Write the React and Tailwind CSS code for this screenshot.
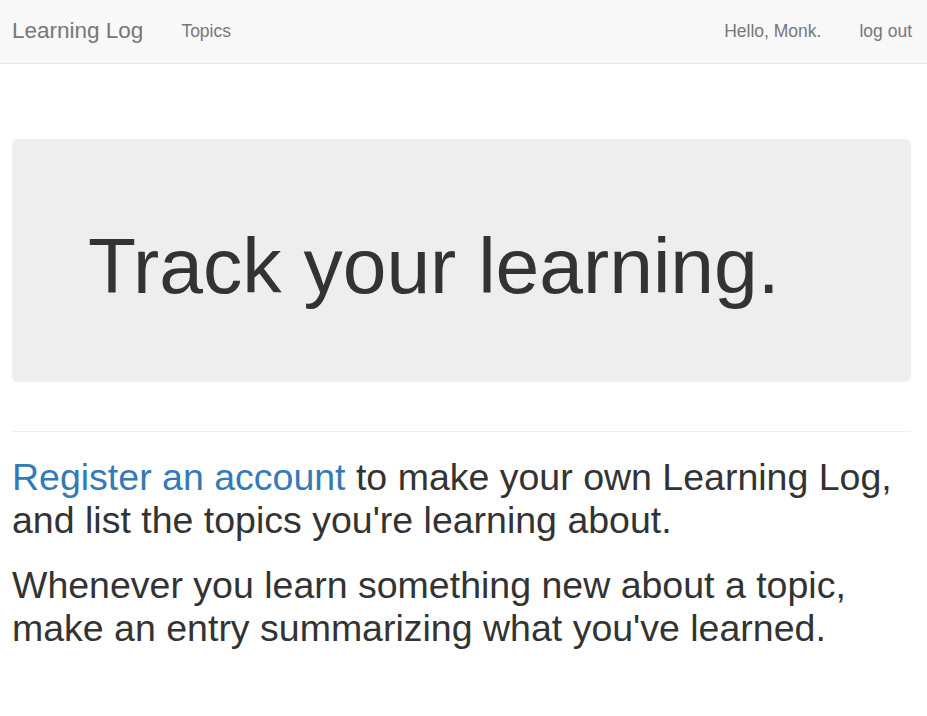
export default function App() {
  return (
    <div className="min-h-[716px] bg-white" style={{ fontFamily: '"Liberation Sans", Arial, sans-serif' }}>
      <nav className="h-[64px] bg-[#f8f8f8] border-b border-[#e7e7e7] flex items-center px-[12px] pr-[15px]">
        <a className="text-[22.5px] text-[#777] leading-none">Learning Log</a>
        <a className="ml-[38px] text-[17.5px] text-[#777] leading-none">Topics</a>
        <div className="ml-auto flex items-center gap-[38px]">
          <span className="text-[17.5px] text-[#777] leading-none">Hello, Monk.</span>
          <a className="text-[17.5px] text-[#777] leading-none">log out</a>
        </div>
      </nav>
      <div className="px-[12px] pr-[16px]">
        <div className="mt-[75px] h-[243px] rounded-[6px] bg-[#eee] pt-[84px] pl-[76px]">
          <h1 className="text-[78.6px] leading-[87px] text-[#333] whitespace-nowrap">Track your learning.</h1>
        </div>
        <div className="mt-[49px] h-px bg-[#eee]" />
        <p className="mt-[24px] text-[37.5px] leading-[43px] text-[#333]">
          <a className="text-[#337ab7]">Register an account</a> to make your own Learning Log, and list the topics you're learning about.
        </p>
        <p className="mt-[22px] text-[37.5px] leading-[43px] text-[#333]">
          Whenever you learn something new about a topic, make an entry summarizing what you've learned.
        </p>
      </div>
    </div>
  );
}
